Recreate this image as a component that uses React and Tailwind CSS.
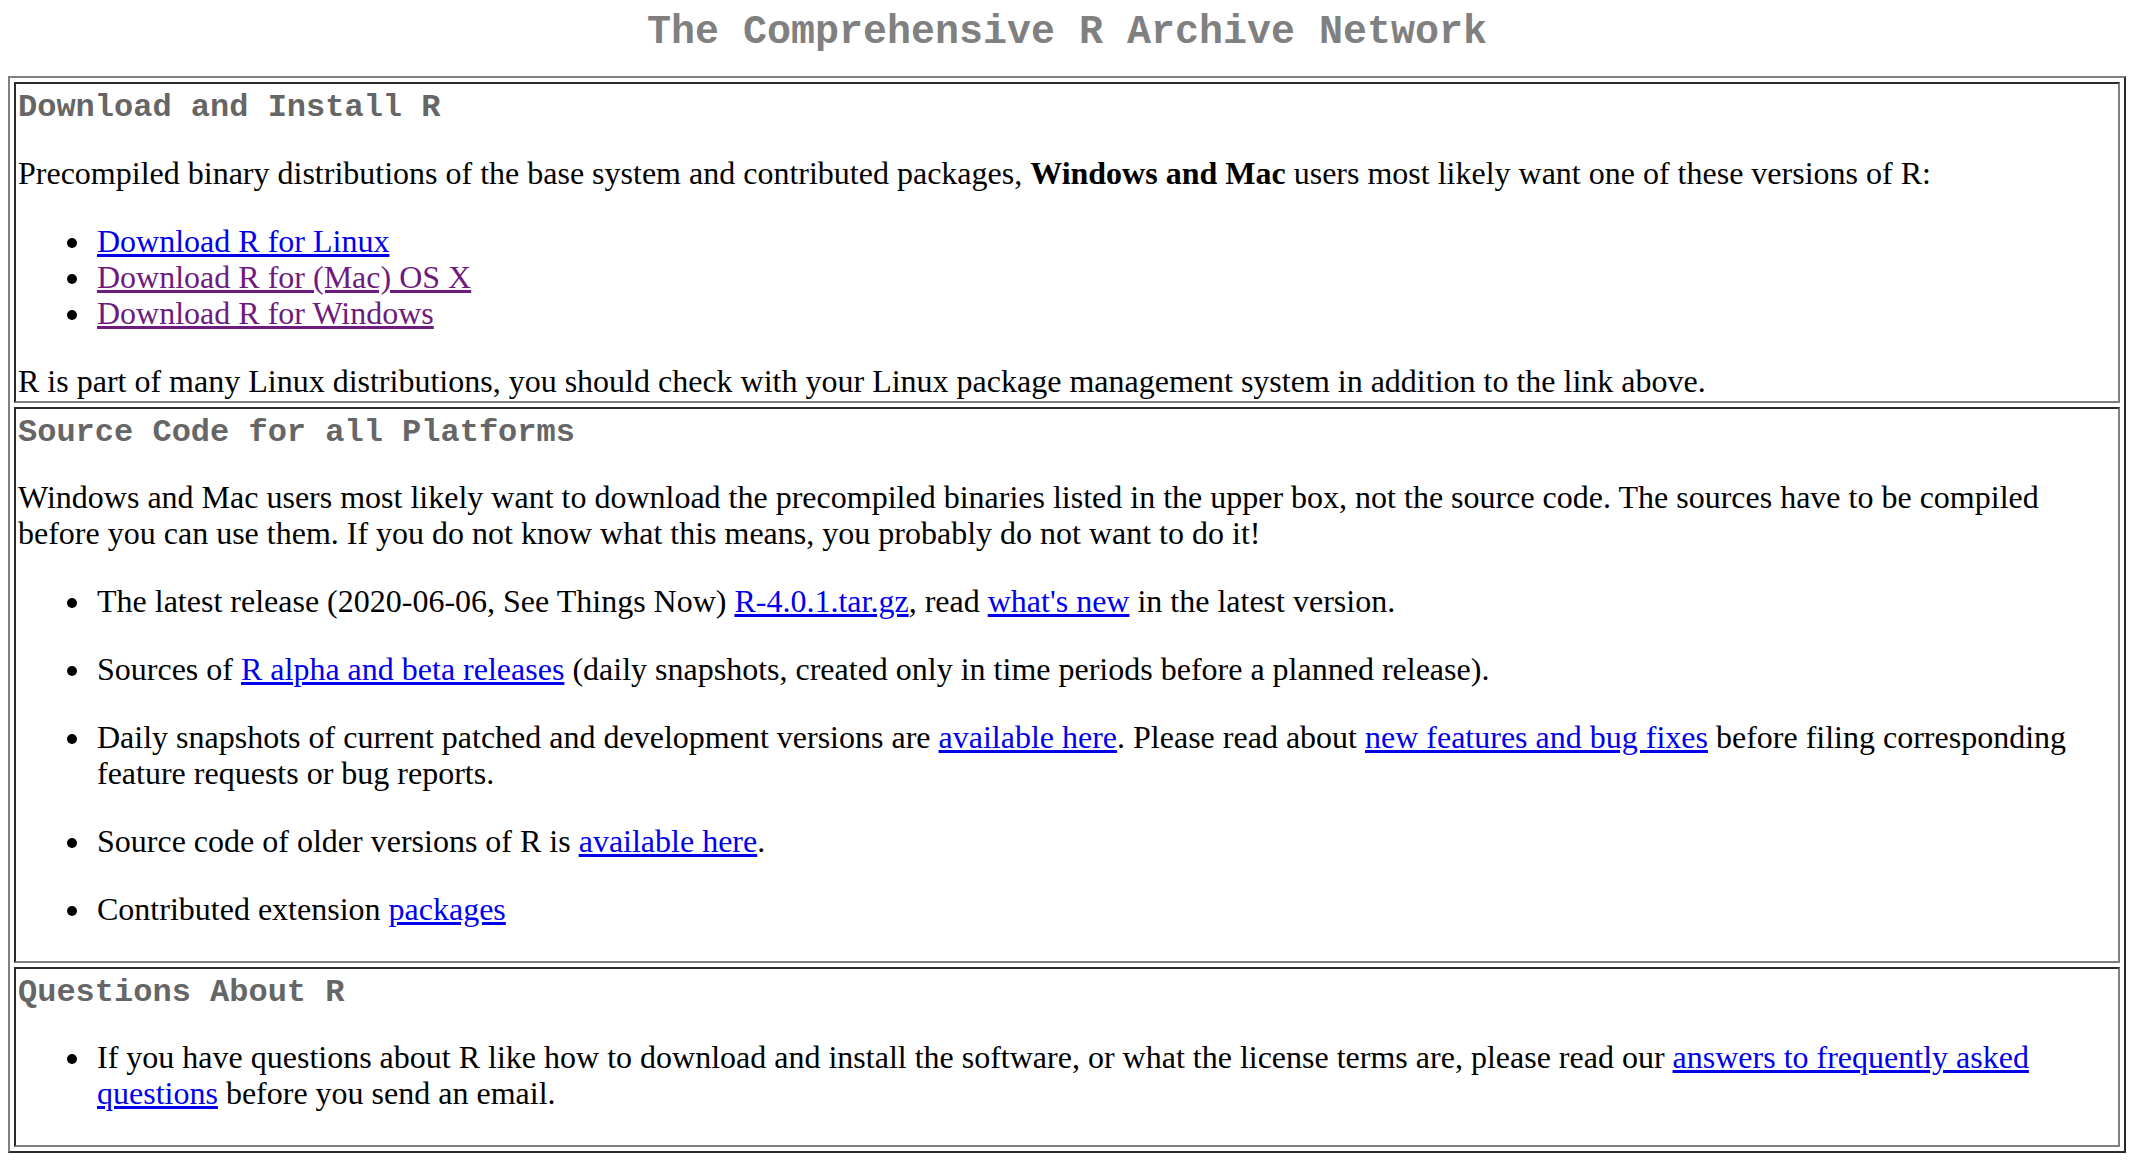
const MONO = "font-['Liberation_Mono','Courier_New',monospace]";

function Cell({ title, children }) {
  return (
    <div className="border-2 border-t-[#2b2b2b] border-l-[#2b2b2b] border-r-[#808080] border-b-[#808080] p-[2px]">
      <div className={`${MONO} font-bold text-[32px] text-[#666666] leading-[36px] pt-[4px]`}>{title}</div>
      {children}
    </div>
  );
}

function Link({ children, visited }) {
  return (
    <a href="#" className={`underline ${visited ? 'text-[#6e1a7e]' : 'text-[#0000ee]'}`}>
      {children}
    </a>
  );
}

const LIST = 'list-disc pl-[75px] mb-8 [&>li]:pl-[4px]';

export default function App() {
  return (
    <div className="bg-white min-h-screen px-[8px] pt-[10px] pb-[10px] font-['Liberation_Serif','Times_New_Roman',serif] text-[32px] leading-[36px] text-black">
      <h1 className={`${MONO} text-center font-bold text-[40px] leading-[45px] text-[#808080] mb-[21px]`}>
        The Comprehensive R Archive Network
      </h1>

      {/* outer table */}
      <div className="border-2 border-t-[#808080] border-l-[#808080] border-r-[#2b2b2b] border-b-[#2b2b2b] p-[4px] flex flex-col gap-[4px]">
        <Cell title="Download and Install R">
          <p className="mt-[29px] mb-8">
            Precompiled binary distributions of the base system and contributed packages, <b>Windows and Mac</b> users most likely want one of these versions of R:
          </p>
          <ul className={`${LIST} mt-8`}>
            <li><Link>Download R for Linux</Link></li>
            <li><Link visited>Download R for (Mac) OS X</Link></li>
            <li><Link visited>Download R for Windows</Link></li>
          </ul>
          R is part of many Linux distributions, you should check with your Linux package management system in addition to the link above.
        </Cell>

        <Cell title="Source Code for all Platforms">
          <p className="mt-[28px] mb-8">
            Windows and Mac users most likely want to download the precompiled binaries listed in the upper box, not the source code. The sources have to be compiled before you can use them. If you do not know what this means, you probably do not want to do it!
          </p>
          <ul className={`${LIST} mt-8`}>
            <li>
              <p className="my-8">
                The latest release (2020-06-06, See Things Now) <Link>R-4.0.1.tar.gz</Link>, read <Link>what's new</Link> in the latest version.
              </p>
            </li>
            <li>
              <p className="my-8">
                Sources of <Link>R alpha and beta releases</Link> (daily snapshots, created only in time periods before a planned release).
              </p>
            </li>
            <li>
              <p className="my-8">
                Daily snapshots of current patched and development versions are <Link>available here</Link>. Please read about <Link>new features and bug fixes</Link> before filing corresponding feature requests or bug reports.
              </p>
            </li>
            <li>
              <p className="my-8">
                Source code of older versions of R is <Link>available here</Link>.
              </p>
            </li>
            <li>
              <p className="my-8">
                Contributed extension <Link>packages</Link>
              </p>
            </li>
          </ul>
        </Cell>

        <Cell title="Questions About R">
          <ul className={`${LIST} mt-[28px]`}>
            <li>
              If you have questions about R like how to download and install the software, or what the license terms are, please read our <Link>answers to frequently asked questions</Link> before you send an email.
            </li>
          </ul>
        </Cell>
      </div>
    </div>
  );
}
